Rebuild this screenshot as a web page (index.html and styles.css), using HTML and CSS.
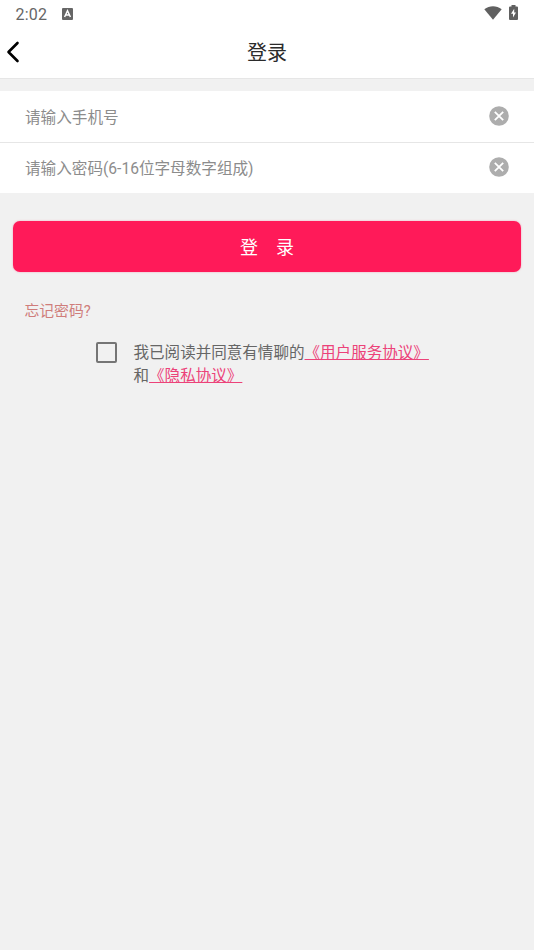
FILE: index.html
```
<!DOCTYPE html>
<html lang="zh-CN">
<head>
<meta charset="utf-8">
<title>登录</title>
<link rel="stylesheet" href="styles.css">
</head>
<body>
<div class="status">
  <span class="time">2:02</span>
  <svg class="app-icon" width="11" height="12" viewBox="0 0 11 12"><rect width="11" height="12" rx="1" fill="#666"/><path d="M2.6 9 5.5 2.8 8.4 9M3.7 7.1h3.6" fill="none" stroke="#fff" stroke-width="1.5"/></svg>
  <svg class="wifi" width="18" height="14" viewBox="0 0 18 14"><path d="M.3 3.2C5.5-.9 12.500-.9 17.700 3.200L9 13.800Z" fill="#606060"/></svg>
  <svg class="battery" width="9" height="15" viewBox="0 0 9 15"><path d="M2.500 0h4v1.500H8Q9 1.500 9 2.500V14Q9 15 8 15H1Q0 15 0 14V2.500Q0 1.500 1 1.500h1.500Z" fill="#606060"/><path d="M5.200 3.800 2 8.800h2v3.700L7 7.500H5.200Z" fill="#fff"/></svg>
</div>
<header class="header">
  <svg class="back" width="14" height="22" viewBox="0 0 14 22"><path d="M11.500 2 2.500 11l9 9" fill="none" stroke="#000" stroke-width="2.600" stroke-linecap="round" stroke-linejoin="round"/></svg>
  <h1 class="title">登录</h1>
</header>
<main>
  <section class="fields">
    <div class="field">
      <span>请输入手机号</span>
      <svg width="20" height="20" viewBox="0 0 20 20"><circle cx="10" cy="10" r="9.800" fill="#adadad"/><path d="m5.800 5.800 8.400 8.400m0-8.400-8.400 8.400" stroke="#fff" stroke-width="1.800"/></svg>
    </div>
    <div class="field">
      <span>请输入密码(6-16位字母数字组成)</span>
      <svg width="20" height="20" viewBox="0 0 20 20"><circle cx="10" cy="10" r="9.800" fill="#adadad"/><path d="m5.800 5.800 8.400 8.400m0-8.400-8.400 8.400" stroke="#fff" stroke-width="1.800"/></svg>
    </div>
  </section>
  <button class="submit"><span>登</span><span>录</span></button>
  <div class="forgot">忘记密码?</div>
  <div class="agreement">
    <span class="checkbox"></span>
    <p class="terms">我已阅读并同意有情聊的<span class="link">《用户服务协议》</span><br>和<span class="link">《隐私协议》</span></p>
  </div>
</main>
</body>
</html>
```
FILE: styles.css
```
* { box-sizing: border-box; }
body {
  margin: 0;
  min-height: 950px;
  background: #f1f1f1;
  font-family: Roboto, "Noto Sans CJK SC", sans-serif;
}
svg { display: block; flex: none; }
.status {
  display: flex;
  align-items: center;
  height: 27px;
  padding: 0 16px 0 15.5px;
  background: #fff;
}
.time { width: 46px; font-size: 16px; line-height: 27px; padding-top: 1px; color: #666; letter-spacing: .2px; }
.wifi { margin-left: auto; margin-right: 7px; margin-bottom: 1px; }
.battery { margin-bottom: 2px; }
.header {
  display: grid;
  grid-template-columns: 40px 1fr 40px;
  align-items: center;
  height: 52px;
  padding-bottom: 2px;
  background: #fff;
  border-bottom: 1px solid #e6e6e6;
}
.back { margin-left: 6px; }
.title { margin: 0; padding-top: 2px; text-align: center; font-size: 20px; font-weight: 400; line-height: 30px; color: #2b2b2b; }
.fields { margin-top: 12px; background: #fff; }
.field {
  display: flex;
  align-items: center;
  justify-content: space-between;
  height: 51px;
  padding: 0 25px 1px;
  font-size: 15.6px;
  line-height: 24px;
  color: #8c8c8c;
}
.field span { padding-top: 4px; }
.field:first-child { height: 52px; border-bottom: 1px solid #e6e6e6; }
.field:last-child { height: 50px; }
.field:last-child span { padding-top: 3px; }
.field:last-child svg { margin-bottom: 1px; }
.submit {
  display: flex;
  align-items: center;
  justify-content: center;
  gap: 18px;
  width: 508px;
  height: 51px;
  margin: 28px 13px 0;
  padding: 2px 0 0;
  border: 0;
  border-radius: 7px;
  background: #ff1a59;
  box-shadow: 0 0 2px #ff1a5966;
  font: 18px/28px Roboto, "Noto Sans CJK SC", sans-serif;
  color: #fff;
}
.forgot { margin: 27px 0 0 24.5px; font-size: 14.8px; line-height: 24px; color: #cf7d7b; }
.agreement { display: flex; margin: 18px 0 0 96px; }
.checkbox {
  flex: none;
  width: 21px;
  height: 21px;
  border: 2px solid #757575;
  border-radius: 2px;
  margin-top: .5px;
}
.terms { margin: 1px 0 0 16.5px; font-size: 15.55px; line-height: 23px; color: #666; white-space: nowrap; }
.link { color: #ec4279; text-decoration: underline; text-decoration-thickness: 1px; text-underline-offset: 1px; }
```
